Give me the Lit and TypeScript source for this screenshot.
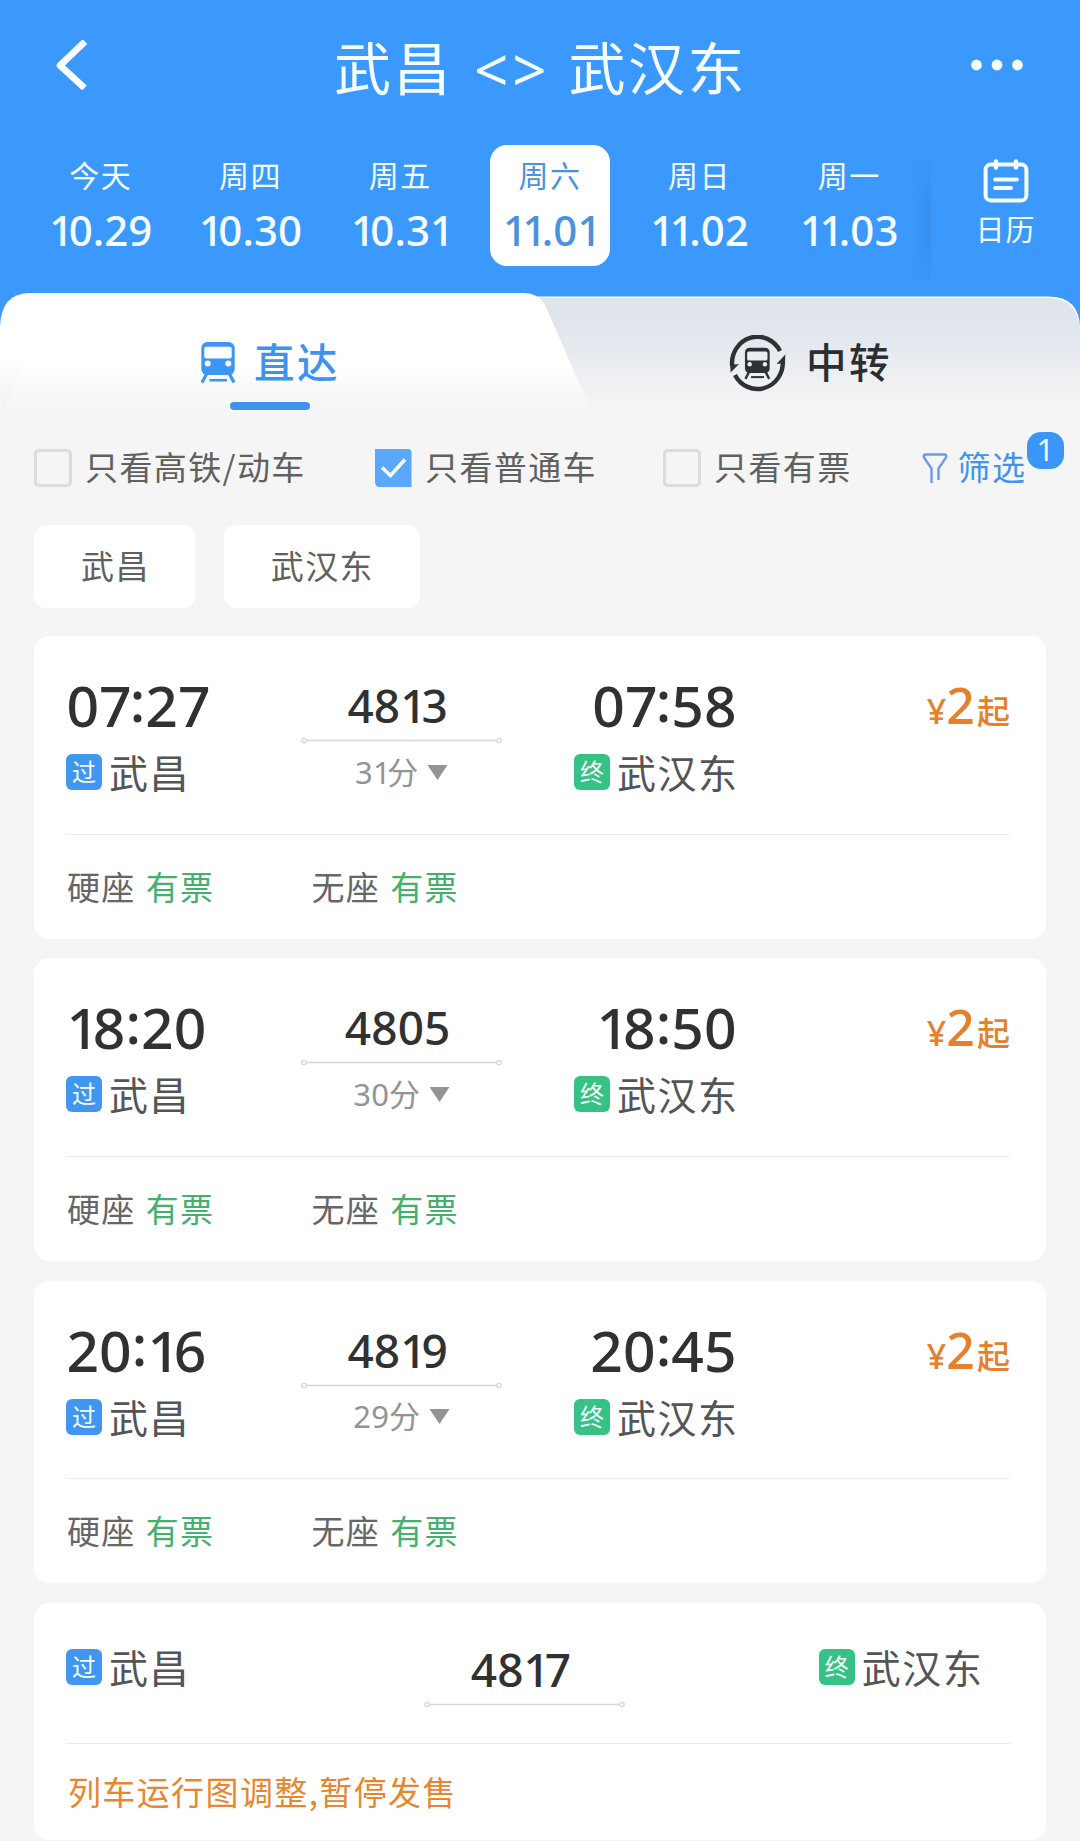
import { LitElement, html, svg, css, nothing } from "lit";
import { customElement, property } from "lit/decorators.js";
import { classMap } from "lit/directives/class-map.js";

interface Train {
  no: string;
  depart?: string;
  arrive?: string;
  minutes?: number;
  price?: number;
  seats?: string[];
  notice?: string;
}

const TRAINS: Train[] = [
  { no: "4813", depart: "07:27", arrive: "07:58", minutes: 31, price: 2, seats: ["硬座", "无座"] },
  { no: "4805", depart: "18:20", arrive: "18:50", minutes: 30, price: 2, seats: ["硬座", "无座"] },
  { no: "4819", depart: "20:16", arrive: "20:45", minutes: 29, price: 2, seats: ["硬座", "无座"] },
  { no: "4817", notice: "列车运行图调整,暂停发售" },
];

const DAYS = [
  ["今天", "10.29"],
  ["周四", "10.30"],
  ["周五", "10.31"],
  ["周六", "11.01"],
  ["周日", "11.02"],
  ["周一", "11.03"],
];

const shared = css`
  * {
    box-sizing: border-box;
  }
  svg {
    display: block;
    flex: none;
  }
  .num {
    font-family: "Noto Sans", "Open Sans", sans-serif;
    font-weight: 500;
    letter-spacing: 0.002em;
    white-space: nowrap;
  }
  .one {
    letter-spacing: -0.11em;
  }
  .seven {
    letter-spacing: -0.035em;
  }
  .colon {
    position: relative;
    top: -0.09em;
  }
`;

/* Digits with proportional widths: the narrow ones take less room. */
const num = (text: string) =>
  [...text].map((c) => {
    const cls = c === "1" ? "one" : c === "7" ? "seven" : c === ":" ? "colon" : "";
    return cls ? html`<span class=${cls}>${c}</span>` : c;
  });

@customElement("train-header")
export class TrainHeader extends LitElement {
  static styles = [
    shared,
    css`
      :host {
        display: block;
        height: 293px;
        color: #f4fdff;
      }
      .bar {
        display: grid;
        grid-template-columns: 200px 1fr 200px;
        align-items: center;
        height: 130px;
      }
      .back {
        margin-left: 54px;
      }
      .title {
        display: flex;
        justify-content: center;
        align-items: center;
        font-size: 57px;
        letter-spacing: 2.5px;
        line-height: 80px;
        padding-left: 1px;
      }
      .both {
        font-family: "Noto Sans", sans-serif;
        font-size: 60px;
        letter-spacing: 4px;
        margin: 7px 18px 0 21px;
      }
      .more {
        justify-self: end;
        margin-right: 56px;
      }
      .days {
        display: flex;
        height: 163px;
        padding: 15px 0 0 26px;
      }
      .day {
        width: 149.7px;
        display: flex;
        justify-content: center;
      }
      .box {
        width: 120px;
        height: 121px;
        border-radius: 17px;
        padding-top: 9px;
        display: flex;
        flex-direction: column;
        align-items: center;
      }
      .box.on {
        background: #fff;
        color: #4a92dc;
      }
      .week {
        font-size: 30px;
        letter-spacing: 1.5px;
        line-height: 40px;
        white-space: nowrap;
      }
      .date {
        font-size: 42px;
        line-height: 50px;
        margin-top: 11px;
      }
      .edge {
        width: 20px;
        height: 130px;
        margin: 8px 0 0 -13px;
        background: linear-gradient(90deg, rgba(52, 136, 228, 0), rgba(52, 136, 228, 0.5));
        -webkit-mask-image: linear-gradient(transparent, #000 40%, #000 65%, transparent);
        mask-image: linear-gradient(transparent, #000 40%, #000 65%, transparent);
      }
      .calendar {
        flex: 1;
        display: flex;
        flex-direction: column;
        align-items: center;
      }
      .calendar svg {
        margin-top: 14px;
      }
      .calendar span {
        font-size: 29px;
        letter-spacing: 1px;
        line-height: 36px;
        margin-top: 7px;
      }
    `,
  ];

  render() {
    return html`
      <div class="bar">
        <svg class="back" width="38" height="50" viewBox="0 0 38 50">
          <path d="M31 1.5 6 25.5 30.5 48" fill="none" stroke="#fff" stroke-width="6.6" stroke-linejoin="round" />
        </svg>
        <div class="title">
          <span>武昌</span>
          <span class="both">&lt;&gt;</span>
          <span>武汉东</span>
        </div>
        <svg class="more" width="54" height="14" viewBox="0 0 54 14" fill="#f4fdff">
          <circle cx="6.5" cy="7" r="5.4" />
          <circle cx="27" cy="7" r="5.4" />
          <circle cx="47.5" cy="7" r="5.4" />
        </svg>
      </div>
      <div class="days">
        ${DAYS.map(
          ([week, date]) => html`<div class="day">
            <div class=${classMap({ box: true, on: date === "11.01" })}>
              <span class="week">${week}</span>
              <span class="num date">${num(date)}</span>
            </div>
          </div>`
        )}
        <div class="edge"></div>
        <div class="calendar">
          <svg width="46" height="44" viewBox="0 0 46 44" fill="none" stroke="#f4fdff" stroke-linecap="round">
            <rect x="2.6" y="5.6" width="40.8" height="35.8" rx="5" stroke-width="4" />
            <path d="M13 2.5v6M33 2.5v6" stroke-width="4.4" />
            <path d="M12 20.5h22M12 29h16" stroke-width="3.8" />
          </svg>
          <span>日历</span>
        </div>
      </div>
    `;
  }
}

@customElement("route-tabs")
export class RouteTabs extends LitElement {
  static styles = [
    shared,
    css`
      :host {
        display: block;
        position: relative;
        height: 122px;
      }
      .shape {
        position: absolute;
        inset: 0;
      }
      .tabs {
        position: relative;
        display: flex;
        height: 122px;
      }
      .tab {
        display: flex;
        font-size: 40.5px;
        font-weight: 500;
        letter-spacing: 2.5px;
        line-height: 50px;
      }
      .direct {
        width: 540px;
        flex-direction: column;
        align-items: center;
        color: #3e94ec;
      }
      .label {
        display: flex;
        align-items: center;
        margin-top: 41px;
      }
      .direct .label {
        gap: 18px;
      }
      .direct .label svg {
        margin-top: 7px;
      }
      .direct .label span {
        margin-top: 2px;
        height: 48px;
      }
      .bar {
        width: 80px;
        height: 7.5px;
        border-radius: 4px;
        background: #3e94ec;
        margin-top: 18px;
      }
      .transfer {
        width: 540px;
        color: #2b2d30;
        padding-left: 189px;
        align-items: flex-start;
      }
      .transfer .label {
        gap: 19px;
        height: 58px;
      }
      .transfer .label svg {
        margin-top: 2px;
      }
      .transfer .label span {
        margin-top: -4px;
      }
    `,
  ];

  private train(body: string, glass: string) {
    return svg`
      <rect x="1.3" y="0" width="33.4" height="33" rx="6" fill=${body}/>
      <path d="M6.5 32 2 40.5M29.5 32 34 40.5" stroke=${body} stroke-width="3.2"/>
      <rect x="4.3" y="4.8" width="27.4" height="11.8" rx="2" fill=${glass}/>
      <circle cx="7.7" cy="21.5" r="3" fill=${glass}/>
      <circle cx="28.3" cy="21.5" r="3" fill=${glass}/>
      <path d="M9.5 38.2h17.5" stroke=${body} stroke-width="2.6"/>`;
  }

  render() {
    return html`
      <svg class="shape" width="1080" height="122" viewBox="0 0 1080 122">
        <defs>
          <linearGradient id="back" x1="0" y1="0" x2="0" y2="1">
            <stop offset="0" stop-color="#dfe4ea" />
            <stop offset="0.25" stop-color="#e1e6ee" />
            <stop offset="0.6" stop-color="#ebeef1" />
            <stop offset="0.95" stop-color="#f5f5f5" />
          </linearGradient>
          <linearGradient id="front" x1="0" y1="0" x2="0" y2="1">
            <stop offset="0.55" stop-color="#fff" />
            <stop offset="0.97" stop-color="#f5f5f5" />
          </linearGradient>
          <linearGradient id="side" x1="0" y1="0" x2="0" y2="1">
            <stop offset="0.5" stop-color="#fff" />
            <stop offset="0.85" stop-color="#f3f5f6" />
            <stop offset="1" stop-color="#f5f5f5" />
          </linearGradient>
        </defs>
        <path d="M500 3.5H1048Q1080 3.5 1080 36V122H500z" fill="#fff" />
        <path d="M500 5H1047Q1079 5 1080 38V122H500z" fill="url(#back)" />
        <path d="M0 122V34Q1 0 30 0H500V122z" fill="url(#side)" />
        <path d="M2 122 28 58V0H524Q538 0 545 12L593 122z" fill="url(#front)" />
      </svg>
      <div class="tabs">
        <div class="tab direct">
          <div class="label">
            <svg width="36" height="42" viewBox="0 0 36 42">${this.train("#3b96f8", "#fff")}</svg>
            <span>直达</span>
          </div>
          <div class="bar"></div>
        </div>
        <div class="tab transfer">
          <div class="label">
            <svg width="58" height="58" viewBox="0 0 58 58">
              <g fill="none" stroke="#2f3235" stroke-width="4.4">
                <path d="M3.2 31A25.4 26.3 0 0 1 51 16" />
                <path d="M53.8 26A25.4 26.3 0 0 1 6 40" />
              </g>
              <path d="M1 28 1.7 37.5 10 29 5 29.5zM56 29 56.3 19.5 47.5 29 52 28.5z" fill="#2f3235" />
              <g transform="translate(15 12.7) scale(0.74 0.77)">${this.train("#2f3235", "#e9ecf0")}</g>
            </svg>
            <span>中转</span>
          </div>
        </div>
      </div>
    `;
  }
}

@customElement("filter-bar")
export class FilterBar extends LitElement {
  static styles = [
    shared,
    css`
      :host {
        display: block;
        color: #5f6060;
        font-size: 33px;
        letter-spacing: 1.4px;
      }
      .row {
        display: flex;
        align-items: center;
        height: 106px;
        padding-left: 34px;
      }
      .item {
        display: flex;
        align-items: center;
        gap: 13.5px;
        line-height: 40px;
        white-space: nowrap;
      }
      .item span {
        margin-top: -5px;
      }
      .speed {
        width: 340.5px;
      }
      .plain {
        width: 288.5px;
      }
      .left {
        width: 259px;
      }
      .box {
        width: 37.5px;
        height: 38px;
        border: 3px solid #dcdcdc;
        border-radius: 5px;
      }
      .filter {
        position: relative;
        gap: 9.5px;
        color: #3f94ec;
      }
      .filter .count {
        position: absolute;
        left: 105px;
        top: -19px;
        width: 37px;
        height: 37px;
        border-radius: 14px;
        background: #3b96fa;
        color: #f4fdff;
        font-size: 31px;
        font-weight: 400;
        line-height: 35px;
        text-align: center;
      }
      .chips {
        display: flex;
        gap: 28.5px;
        padding: 4px 0 0 34px;
      }
      .chip {
        height: 83px;
        line-height: 80px;
        padding: 0 45.5px 0 47px;
        border-radius: 12px;
        background: #fff;
      }
    `,
  ];

  render() {
    return html`
      <div class="row">
        <div class="item speed">
          <div class="box"></div>
          <span>只看高铁/动车</span>
        </div>
        <div class="item plain">
          <svg width="37" height="38" viewBox="0 0 37 38">
            <path d="M4 0H33Q36.5 0 36.5 4V38H5Q0 38 0 33V0z" fill="#5aa8fb" />
            <path d="M7 18.5 15.5 26.5 30 10.5" fill="none" stroke="#f4fdff" stroke-width="3.6" />
          </svg>
          <span>只看普通车</span>
        </div>
        <div class="item left">
          <div class="box"></div>
          <span>只看有票</span>
        </div>
        <div class="item filter">
          <svg width="26" height="31" viewBox="0 0 26 31">
            <path
              d="M9.5 30V15.5L2 4.5Q.8 1.5 4 1.5H22Q25.2 1.5 24 4.5L16.5 15.5V27"
              fill="none"
              stroke="#7096f0"
              stroke-width="2.4"
            />
          </svg>
          <span>筛选</span>
          <div class="num count">1</div>
        </div>
      </div>
      <div class="chips">
        <div class="chip">武昌</div>
        <div class="chip">武汉东</div>
      </div>
    `;
  }
}

@customElement("train-card")
export class TrainCard extends LitElement {
  @property({ attribute: false }) train!: Train;

  static styles = [
    shared,
    css`
      :host {
        display: block;
        background: #fff;
        border-radius: 15px;
        padding: 0 35.5px 0 31.5px;
      }
      .main {
        display: grid;
        grid-template-columns: 235.5px 200.5px 234.8px 1fr;
        height: 198.5px;
        border-bottom: 1.5px solid #ececec;
      }
      .main.halted {
        grid-template-columns: 358px 200.5px 357.2px 1fr;
        height: 141px;
      }
      .end {
        display: flex;
        flex-direction: column;
        padding-top: 37px;
      }
      .halted .end {
        padding-top: 46px;
      }
      .to {
        align-items: flex-end;
      }
      .to .station {
        margin-right: -2px;
      }
      .time {
        font-size: 57px;
        line-height: 64px;
        color: #303133;
        margin: 0 0 17px 0.5px;
        height: 64px;
      }
      .station {
        display: flex;
        align-items: center;
        gap: 7px;
        height: 36px;
        font-size: 39px;
        letter-spacing: 1.6px;
        color: #535556;
      }
      .station span {
        margin-top: -2px;
        white-space: nowrap;
      }
      .badge {
        width: 36px;
        height: 36px;
        border-radius: 6px;
        background: #4196f0;
        color: #f4fdff;
        font-size: 24px;
        letter-spacing: 0;
        line-height: 34px;
        text-align: center;
      }
      .badge.final {
        background: #35c284;
      }
      .mid {
        display: flex;
        flex-direction: column;
        align-items: center;
        padding-top: 41px;
      }
      .halted .mid {
        padding-top: 38px;
      }
      .no {
        font-size: 46px;
        line-height: 56px;
        color: #303133;
        padding-right: 8px;
      }
      .mid svg.track {
        margin-top: 4px;
      }
      .lasts {
        display: flex;
        align-items: center;
        gap: 9px;
        height: 40px;
        margin-top: 7px;
        font-size: 31px;
        line-height: 40px;
        color: #949494;
      }
      .lasts svg {
        margin-top: 2px;
      }
      .lasts .num {
        font-weight: 400;
      }
      .price {
        display: flex;
        justify-content: flex-end;
        align-items: baseline;
        height: 64px;
        margin-top: 37px;
        color: #e6802a;
        line-height: 64px;
      }
      .price .yen {
        font-size: 34px;
        font-weight: 500;
        line-height: 40px;
      }
      .price .amount {
        font-size: 50px;
        font-weight: 550;
        margin: 0 2px 0 0;
      }
      .from {
        font-size: 33px;
        line-height: 40px;
        font-weight: 500;
      }
      .foot {
        display: flex;
        align-items: center;
        height: 104px;
        padding: 0 0 2px 1px;
        font-size: 33px;
        letter-spacing: 1.4px;
        color: #666;
      }
      .foot.note {
        height: 96px;
        padding: 0 0 2px 2px;
        color: #e6872f;
      }
      .seat {
        width: 244.5px;
        display: flex;
        gap: 10px;
      }
      .ok {
        color: #45b06d;
      }
    `,
  ];

  private station(kind: string, name: string, final = false) {
    return html`<div class="station">
      <div class=${classMap({ badge: true, final })}>${kind}</div>
      <span>${name}</span>
    </div>`;
  }

  render() {
    const t = this.train;
    return html`
      <div class=${classMap({ main: true, halted: !t.depart })}>
        <div class="end">
          ${t.depart ? html`<div class="num time">${num(t.depart)}</div>` : nothing}
          ${this.station("过", "武昌")}
        </div>
        <div class="mid">
          <div class="num no">${num(t.no)}</div>
          <svg class="track" width="201" height="7" viewBox="0 0 201 7" fill="none" stroke="#d6d6d6">
            <path d="M5.5 3.5H195.5" stroke-width="1.6" />
            <circle cx="3" cy="3.5" r="2.2" stroke-width="1.3" />
            <circle cx="198" cy="3.5" r="2.2" stroke-width="1.3" />
          </svg>
          ${t.minutes
            ? html`<div class="lasts">
                <span><span class="num">${num(String(t.minutes))}</span>分</span>
                <svg width="21" height="15" viewBox="0 0 21 15"><path d="M.5 0H20.5L10.5 15z" fill="#949494" /></svg>
              </div>`
            : nothing}
        </div>
        <div class="end to">
          ${t.arrive ? html`<div class="num time">${num(t.arrive)}</div>` : nothing}
          ${this.station("终", "武汉东", true)}
        </div>
        ${t.price
          ? html`<div class="price">
              <span class="num yen">¥</span><span class="num amount">${t.price}</span><span class="from">起</span>
            </div>`
          : nothing}
      </div>
      ${t.notice
        ? html`<div class="foot note">${t.notice}</div>`
        : html`<div class="foot">
            ${t.seats?.map((s) => html`<div class="seat"><span>${s}</span><span class="ok">有票</span></div>`)}
          </div>`}
    `;
  }
}

@customElement("app-root")
export class AppRoot extends LitElement {
  static styles = css`
    :host {
      display: block;
      width: 1080px;
      height: 1841px;
      overflow: hidden;
      background: linear-gradient(#3b98fc 0 350px, #f5f5f5 350px);
      font-family: "Noto Sans CJK SC", sans-serif;
    }
    .list {
      display: flex;
      flex-direction: column;
      gap: 19.8px;
      padding: 28px 34.5px 0 34.4px;
    }
  `;

  render() {
    return html`
      <train-header></train-header>
      <route-tabs></route-tabs>
      <filter-bar></filter-bar>
      <div class="list">${TRAINS.map((t) => html`<train-card .train=${t}></train-card>`)}</div>
    `;
  }
}
